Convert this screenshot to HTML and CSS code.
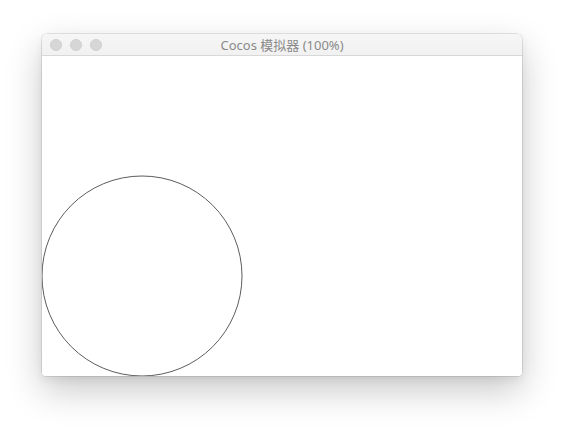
FILE: index.html
```html
<!DOCTYPE html>
<html>
<head>
<meta charset="utf-8">
<link rel="stylesheet" href="styles.css">
</head>
<body>
<div class="window">
  <div class="titlebar">
    <div class="lights">
      <span class="light"></span>
      <span class="light"></span>
      <span class="light"></span>
    </div>
    <div class="title">Cocos 模拟器 (100%)</div>
  </div>
  <div class="content">
    <svg class="canvas" width="480" height="320" viewBox="0 0 480 320">
      <circle cx="100" cy="220" r="100" fill="none" stroke="#4a4a4a" stroke-width="0.9"/>
    </svg>
  </div>
</div>
</body>
</html>
```

FILE: styles.css
```css
html, body {
  margin: 0;
  padding: 0;
  background: #ffffff;
}
body {
  width: 564px;
  height: 426px;
  overflow: hidden;
  padding-top: 34px;
  padding-left: 42px;
  box-sizing: border-box;
}
.window {
  width: 480px;
  height: 342px;
  border-radius: 5px 5px 4px 4px;
  background: #ffffff;
  box-shadow: 0 0 0 0.5px rgba(0,0,0,0.18), 0 14px 36px rgba(0,0,0,0.22), 0 4px 10px rgba(0,0,0,0.06);
  overflow: hidden;
  display: flex;
  flex-direction: column;
}
.titlebar {
  height: 21px;
  flex: none;
  background: linear-gradient(#f6f6f6, #f1f1f1);
  border-bottom: 1px solid #d8d8d8;
  position: relative;
  display: flex;
  align-items: center;
}
.lights {
  display: flex;
  gap: 8px;
  padding-left: 8px;
}
.light {
  width: 12px;
  height: 12px;
  border-radius: 50%;
  background: #d6d6d6;
  border: 0.5px solid #cfcfcf;
  box-sizing: border-box;
}
.title {
  position: absolute;
  left: 0;
  right: 0;
  top: 0;
  line-height: 22px;
  text-align: center;
  font-family: "Noto Sans", "Noto Sans CJK SC", sans-serif;
  font-size: 13px;
  color: #8a8a8a;
}
.content {
  flex: 1;
  background: #ffffff;
}
.canvas {
  display: block;
}
```
